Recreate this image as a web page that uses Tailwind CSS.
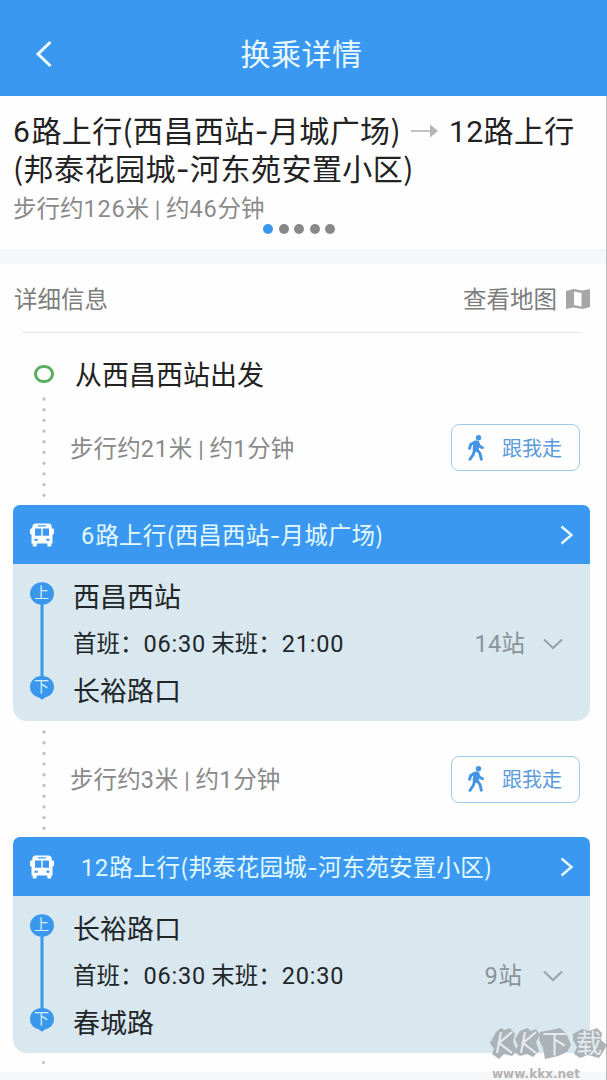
<!DOCTYPE html>
<html lang="zh-CN">
<head>
<meta charset="utf-8">
<title>换乘详情</title>
<script src="https://cdn.jsdelivr.net/npm/@tailwindcss/browser@4"></script>
</head>
<body class="bg-white">
<svg class="hidden">
  <symbol id="bus" viewBox="0 0 24 24"><path fill="#fff" fill-rule="evenodd" d="M5.500 .5h13q3.200 0 3.200 3.500v1.500h1q1.300 0 1.300 1.300v3.500q0 1.300-1.300 1.300H22.500v8.900h-1.200v2q0 1-1 1h-2q-1 0-1-1v-2H6.700v2q0 1-1 1h-2q-1 0-1-1v-2H1.500v-8.900h-.2Q0 11.600 0 10.300V6.800Q0 5.500 1.300 5.500h1V4Q2.300 .5 5.500 .5zM8 2.200v1.300h8V2.200zM5 5.500v7.300h6.300V5.500zM12.700 5.500v7.300H19V5.500zM4.500 15.700v2.100h3.200v-2.100zM16.300 15.700v2.100h3.200v-2.100z"/></symbol>
  <symbol id="walk" viewBox="0 0 16 26"><circle cx="10.500" cy="2.700" r="2.700" fill="#4494e4"/><path fill="none" stroke="#4494e4" stroke-linecap="round" stroke-linejoin="round" d="M8.400 8.400L7.700 14" stroke-width="6"/><path fill="none" stroke="#4494e4" stroke-linecap="round" stroke-linejoin="round" stroke-width="2.900" d="M7 7L2.700 9.400L1.600 13.300M9.500 7.500L11.500 11.300L14.400 12.600M6.500 15L5.300 19.500L2 24.300M8.700 14L12 18.500L13.300 24.300"/></symbol>
  <symbol id="next" viewBox="0 0 14 20"><path fill="none" stroke="#e9fbff" stroke-width="2.400" d="M1.500 1.500L11.500 10L1.500 18.500"/></symbol>
  <symbol id="down" viewBox="0 0 20 12"><path fill="none" stroke="#9aa3a9" stroke-width="2" d="M1 1.500L10 10L19 1.500"/></symbol>
  <symbol id="dots" viewBox="0 0 4 102"><path fill="none" stroke="#c2c2c2" stroke-width="3.400" stroke-linecap="round" d="M2 2V100" stroke-dasharray="0 10.700"/></symbol>
  <symbol id="stops" viewBox="0 0 26 120"><path stroke="#3a98ec" stroke-width="3" d="M13 12V106"/><ellipse cx="13" cy="12.500" rx="12" ry="11.300" fill="#3a98ec"/><path fill="#3a98ec" d="M13 95c7 0 12 4.700 12 11 0 5.500-3.500 9-9 10.500l-3 2.200-3-2.200c-5.500-1.500-9-5-9-10.500 0-6.300 5-11 12-11z"/></symbol>
</svg>
<div class="relative flex h-[1080px] w-[607px] flex-col overflow-hidden bg-[#f6f7f9] font-['Noto_Sans_CJK_SC','Noto_Sans',sans-serif] whitespace-nowrap">
  <header class="grid h-24 shrink-0 grid-cols-[44px_1fr_44px] items-center bg-[#3a98f0] pl-[22px] pr-[26px] pt-3">
    <svg class="ml-3 h-7 w-[19px]" viewBox="0 0 19 28"><path d="M16.500 2L4 14L16.500 26" fill="none" stroke="#f2fdff" stroke-width="3"/></svg>
    <h1 class="-mt-1 text-center text-[30px] leading-[44px] tracking-[0.5px] text-[#e9f9ff]">换乘详情</h1>
  </header>

  <section class="h-[153px] shrink-0 bg-[#fefefe] pl-[13px] pt-4">
    <div class="flex h-[37px] items-center text-[30px] leading-[37px] text-[#222]">
      <span class="tracking-[0.4px]"><span class="font-['Roboto'] tracking-[1.500px]">6</span>路上行(西昌西站<span class="font-['Inter']">-</span>月城广场)</span>
      <svg class="mr-2.5 ml-[10px] h-4 w-7 shrink-0" viewBox="0 0 28 16"><path d="M0 8H21" stroke="#c2c2c2" stroke-width="2"/><path d="M19 1.500L27 8L19 14.500Z" fill="#b5b5b5"/></svg>
      <span class="tracking-[0.3px]"><span class="font-['Roboto'] tracking-[0.4px]">12</span>路上行</span>
    </div>
    <div class="h-[37px] text-[30px] leading-[37px] tracking-[0.45px] text-[#222]">(邦泰花园城<span class="font-['Inter']">-</span>河东苑安置小区)</div>
    <div class="mt-[7px] h-7 text-[23.500px] leading-7 text-[#8a8a8a]">步行约<span class="font-['Roboto'] tracking-[0.8px]">126</span>米<span class="mx-[6px] align-[2px] text-[17px] font-bold">|</span>约<span class="font-['Roboto'] tracking-[0.8px]">46</span>分钟</div>
    <div class="ml-[250px] mt-[3px] flex gap-[5.500px]">
      <i class="h-2.5 w-2.5 rounded-full bg-[#3a98f0]"></i><i class="h-2.5 w-2.5 rounded-full bg-[#888]"></i><i class="h-2.5 w-2.5 rounded-full bg-[#888]"></i><i class="h-2.5 w-2.5 rounded-full bg-[#888]"></i><i class="h-2.5 w-2.5 rounded-full bg-[#888]"></i>
    </div>
  </section>

  <section class="mt-[15px] h-[808px] shrink-0 bg-[#fefefe]">
    <div class="flex h-[68px] items-center justify-between pl-3.5 pr-[17px] pt-0.5 text-[23.500px] text-[#7d7d7d]">
      <span>详细信息</span>
      <span class="flex items-center gap-[9px]">查看地图
        <svg class="h-5 w-6" viewBox="0 0 24 20"><path fill="#a6a6a6" fill-rule="evenodd" d="M0 2L7.500 0L16.500 1.500L24 0V18L16.500 20L7.500 18.500L0 20ZM8 2.500V16L15.500 17.500V4Z"/></svg>
      </span>
    </div>
    <div class="ml-[22px] h-px w-[560px] bg-[#e9e9e9]"></div>
    <div class="grid h-[172px] grid-cols-[75px_1fr] pt-[19px]">
      <div class="flex flex-col items-center pl-[13px]">
        <div class="mt-[13px] h-[18px] w-5 shrink-0 rounded-full border-[3.500px] border-[#5aae60]"></div>
        <svg class="mt-[14px] h-[102px] w-1 shrink-0"><use href="#dots"/></svg>
      </div>
      <div>
        <div class="flex h-11 items-center text-[27px] text-[#222]">从西昌西站出发</div>
        <div class="mt-[28px] flex items-center justify-between pr-[27px]">
          <span class="-ml-[5px] pt-0.5 text-[23.500px] tracking-[0.1px] text-[#8a8a8a]">步行约<span class="font-['Roboto'] tracking-[0.8px]">21</span>米<span class="mx-[6px] align-[2px] text-[17px] font-bold">|</span>约<span class="font-['Roboto'] tracking-[0.8px]">1</span>分钟</span>
          <div class="flex h-[47px] w-[129px] items-center rounded-lg border border-[#a3cbe8] pl-4 text-[20px] text-[#5b9bdc]"><svg class="mr-[18px] h-[26px] w-4"><use href="#walk"/></svg><span>跟我走</span></div>
        </div>
      </div>
    </div>

    <article class="ml-[13px] h-[216px] w-[577px] overflow-hidden rounded-t-[7px] rounded-b-[14px] bg-[#d9e7ee]">
      <div class="flex h-[59px] items-center bg-[#3a98f0] pl-[17px] pr-4 text-[23.500px] text-[#e4faff]">
        <svg class="h-6 w-6"><use href="#bus"/></svg><span class="ml-[27px] pt-0.5 tracking-[0.2px]"><span class="font-['Roboto'] tracking-[1.200px]">6</span>路上行(西昌西站<span class="font-['Inter']">-</span>月城广场)</span>
        <svg class="ml-auto h-5 w-3.5"><use href="#next"/></svg>
      </div>
      <div class="grid grid-cols-[60px_1fr] pt-[8px]">
        <div class="relative pl-4 pt-[9px]"><svg class="h-[120px] w-[26px]"><use href="#stops"/></svg>
          <span class="absolute left-[21px] top-[10px] text-[15px] leading-5 text-[#d8efff]">上</span><span class="absolute left-[21px] top-[104px] text-[15px] leading-5 text-[#d8efff]">下</span></div>
        <div class="text-[#20262a]">
          <div class="flex h-12 items-center text-[27px]">西昌西站</div>
          <div class="flex h-[46px] items-center pr-[27px] pt-0.5 text-[23.500px]"><span>首班：<span class="font-['Roboto'] tracking-[0.8px]">06:30</span> 末班：<span class="font-['Roboto'] tracking-[0.8px]">21:00</span></span><span class="ml-auto text-[#89939a]"><span class="font-['Roboto'] tracking-[0.3px]">14</span>站</span><svg class="ml-[18px] h-3 w-5"><use href="#down"/></svg></div>
          <div class="flex h-12 items-center text-[27px]">长裕路口</div>
        </div>
      </div>
    </article>

    <div class="grid h-[116px] grid-cols-[75px_1fr]">
      <div class="flex flex-col items-center pl-[13px]"><svg class="mt-[9px] h-[102px] w-1 shrink-0"><use href="#dots"/></svg></div>
      <div class="flex items-center justify-between pr-[27px]">
        <span class="-ml-[5px] pt-0.5 text-[23.500px] tracking-[0.1px] text-[#8a8a8a]">步行约<span class="font-['Roboto'] tracking-[0.8px]">3</span>米<span class="mx-[6px] align-[2px] text-[17px] font-bold">|</span>约<span class="font-['Roboto'] tracking-[0.8px]">1</span>分钟</span>
        <div class="flex h-[47px] w-[129px] items-center rounded-lg border border-[#a3cbe8] pl-4 text-[20px] text-[#5b9bdc]"><svg class="mr-[18px] h-[26px] w-4"><use href="#walk"/></svg><span>跟我走</span></div>
      </div>
    </div>

    <article class="ml-[13px] h-[216px] w-[577px] overflow-hidden rounded-t-[7px] rounded-b-[14px] bg-[#d9e7ee]">
      <div class="flex h-[59px] items-center bg-[#3a98f0] pl-[17px] pr-4 text-[23.500px] text-[#e4faff]">
        <svg class="h-6 w-6"><use href="#bus"/></svg><span class="ml-[27px] pt-0.5 tracking-[0.2px]"><span class="font-['Roboto'] tracking-[0.9px]">12</span>路上行(邦泰花园城<span class="font-['Inter']">-</span>河东苑安置小区)</span>
        <svg class="ml-auto h-5 w-3.5"><use href="#next"/></svg>
      </div>
      <div class="grid grid-cols-[60px_1fr] pt-[8px]">
        <div class="relative pl-4 pt-[9px]"><svg class="h-[120px] w-[26px]"><use href="#stops"/></svg>
          <span class="absolute left-[21px] top-[10px] text-[15px] leading-5 text-[#d8efff]">上</span><span class="absolute left-[21px] top-[104px] text-[15px] leading-5 text-[#d8efff]">下</span></div>
        <div class="text-[#20262a]">
          <div class="flex h-12 items-center text-[27px]">长裕路口</div>
          <div class="flex h-[46px] items-center pr-[27px] pt-0.5 text-[23.500px]"><span>首班：<span class="font-['Roboto'] tracking-[0.8px]">06:30</span> 末班：<span class="font-['Roboto'] tracking-[0.8px]">20:30</span></span><span class="ml-auto mr-[3px] text-[#89939a]"><span class="font-['Roboto'] tracking-[0.8px]">9</span>站</span><svg class="ml-[18px] h-3 w-5"><use href="#down"/></svg></div>
          <div class="flex h-12 items-center text-[27px]">春城路</div>
        </div>
      </div>
    </article>
    <div class="ml-[42px] mt-2 h-[3px] w-[3px] rounded-full bg-[#bdbdbd]"></div>
  </section>
  <div class="absolute right-0 top-24 h-[984px] w-px bg-[#bdbdbd]"></div>

  <svg class="absolute left-[487px] top-[1024px] h-14 w-[120px]" viewBox="0 0 120 56">
    <g fill="#abb3b8"><path d="M9 8L14 4L18 6L23 4L28 10L26 18L30 27L25 32L17 30L12 35L5 30L7 25L3 19Z"/><path d="M33 7L40 4L44 7L49 5L53 11L49 18L52 27L46 33L40 30L33 32L27 28L31 22L28 15Z"/><path d="M53 8L64 6L73 4L79 9L82 16L84 21L80 28L71 32L58 35L56 24L52 16Z"/><path d="M86 10L95 5L102 7L110 4L115 9L114 16L120 21L116 28L112 34L101 31L93 34L87 30L90 23L86 16Z"/></g>
    <g fill="none" stroke="#e4eaed" stroke-width="2.200"><path d="M14 8L10 29M25 8L12 19L25 29M38 8L34 29M49 8L36 19L49 29"/></g>
    <text x="55" y="29" font-size="26" fill="#e4eaed" font-family="Noto Sans CJK SC">下</text><text x="89" y="29" font-size="26" fill="#e4eaed" font-family="Noto Sans CJK SC">载</text>
    <text x="5" y="54" font-size="12" font-weight="700" textLength="88" fill="#b2b2b2" font-family="DejaVu Sans">www.kkx.net</text>
  </svg>
</div>
</body>
</html>
